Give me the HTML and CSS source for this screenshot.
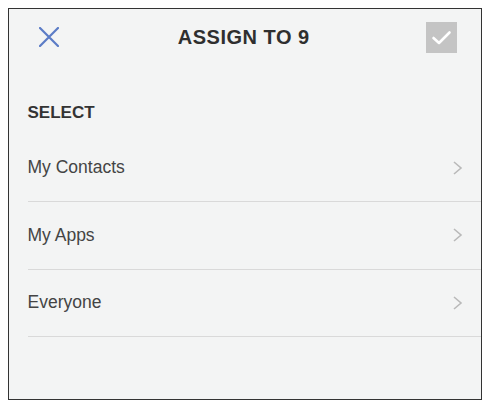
FILE: index.html
```html
<!DOCTYPE html>
<html>
<head>
<meta charset="utf-8">
<link rel="stylesheet" href="styles.css">
</head>
<body>
<div class="frame">
  <div class="header">
    <svg class="close" width="20" height="20" viewBox="0 0 20 20"><path d="M1 1 L19 19 M19 1 L1 19" stroke="#5b7cc6" stroke-width="2.2" fill="none" stroke-linecap="round"/></svg>
    <div class="title">ASSIGN TO 9</div>
    <div class="confirm"><svg width="31" height="31" viewBox="0 0 31 31"><path d="M7.5 16 L13 21 L23.5 10.5" stroke="#ffffff" stroke-width="2.6" fill="none" stroke-linecap="round" stroke-linejoin="round"/></svg></div>
  </div>
  <div class="section">SELECT</div>
  <div class="list">
    <div class="row"><span>My Contacts</span><svg class="chev" width="11" height="14" viewBox="0 0 11 14"><path d="M2 1 L9 7 L2 13" stroke="#b9b9b9" stroke-width="1.6" fill="none"/></svg></div>
    <div class="row"><span>My Apps</span><svg class="chev" width="11" height="14" viewBox="0 0 11 14"><path d="M2 1 L9 7 L2 13" stroke="#b9b9b9" stroke-width="1.6" fill="none"/></svg></div>
    <div class="row"><span>Everyone</span><svg class="chev" width="11" height="14" viewBox="0 0 11 14"><path d="M2 1 L9 7 L2 13" stroke="#b9b9b9" stroke-width="1.6" fill="none"/></svg></div>
  </div>
</div>
</body>
</html>
```
FILE: styles.css
```css
html, body { margin: 0; padding: 0; background: #ffffff; }
body { padding: 8px; font-family: "Liberation Sans", Arial, sans-serif; }
.frame {
  width: 474px;
  height: 392px;
  box-sizing: border-box;
  border: 1.5px solid #333333;
  background: #f3f4f4;
}
.header {
  height: 56px;
  display: flex;
  align-items: center;
  justify-content: space-between;
  padding: 0 23.5px 0 30px;
}
.close { display: block; }
.title {
  font-size: 20px;
  font-weight: bold;
  letter-spacing: 0.5px;
  color: #2f2f2f;
  margin-left: 2px;
}
.confirm {
  width: 31px;
  height: 31px;
  background: #c4c4c4;
}
.confirm svg { display: block; }
.section {
  padding: 37px 0 0 18.5px;
  height: 22px;
  line-height: 22px;
  margin-bottom: 10.5px;
  font-size: 17px;
  font-weight: bold;
  color: #333333;
}
.list { padding-left: 18.5px; }
.row {
  height: 66.5px;
  border-bottom: 1.5px solid #d9d9d9;
  display: flex;
  align-items: center;
  justify-content: space-between;
  padding-right: 18px;
  font-size: 17.5px;
  color: #444444;
}
.chev { display: block; }
```
